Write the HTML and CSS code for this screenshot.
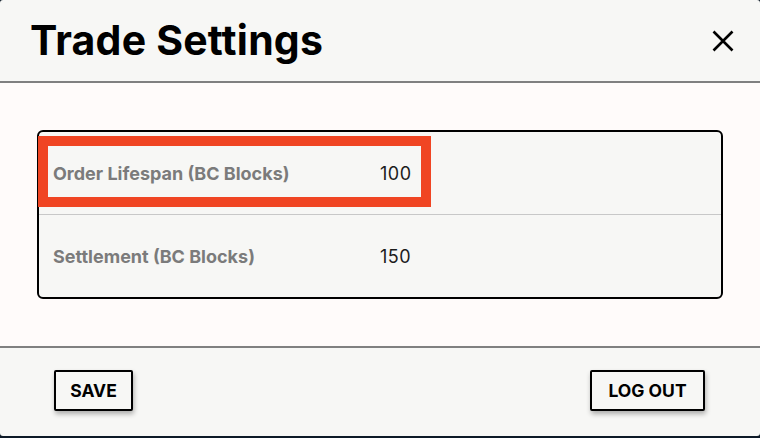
FILE: index.html
```html
<!DOCTYPE html>
<html lang="en">
<head>
<meta charset="utf-8">
<title>Trade Settings</title>
<link rel="stylesheet" href="styles.css">
</head>
<body>
<div class="modal">
  <header class="modal-header">
    <h1 class="modal-title">Trade Settings</h1>
    <button class="close-btn" aria-label="Close">
      <svg viewBox="0 0 22 22" width="22" height="22"><path d="M1.5 1.5 L20.5 20.5 M20.5 1.5 L1.5 20.5" stroke="#000" stroke-width="2.6" fill="none"/></svg>
    </button>
  </header>
  <main class="modal-body">
    <div class="settings-table">
      <div class="settings-row">
        <span class="row-label">Order Lifespan (BC Blocks)</span>
        <span class="row-value">100</span>
      </div>
      <div class="settings-row">
        <span class="row-label">Settlement (BC Blocks)</span>
        <span class="row-value">150</span>
      </div>
      <div class="highlight"></div>
    </div>
  </main>
  <footer class="modal-footer">
    <button class="btn btn-save">SAVE</button>
    <button class="btn btn-logout">LOG OUT</button>
  </footer>
</div>
</body>
</html>
```

FILE: styles.css
```css
html, body {
  margin: 0;
  padding: 0;
  background: #0d1a27;
  height: 100%;
}
body {
  font-family: "Inter", "Lato", sans-serif;
  width: 760px;
  height: 438px;
  overflow: hidden;
}
.modal {
  width: 760px;
  height: 436px;
  background: #f7f7f5;
  border-radius: 3px;
  display: flex;
  flex-direction: column;
  overflow: hidden;
}
.modal-header {
  box-sizing: border-box;
  border-bottom: 2px solid #808080;
  height: 83px;
  display: flex;
  align-items: center;
  justify-content: space-between;
  padding: 0 26px 0 30px;
}
.modal-title {
  margin: 0;
  font-size: 41px;
  font-weight: 700;
  color: #000;
  letter-spacing: 0.2px;
  line-height: 1;
  padding-bottom: 1px;
}
.close-btn {
  background: none;
  border: 0;
  padding: 0;
  width: 22px;
  height: 22px;
  display: flex;
  margin-top: 1px;
}
.modal-body {
  background: #fffbfa;
  height: 265px;
  box-sizing: border-box;
  border-bottom: 2px solid #808080;
  padding: 47px 37px 0 37px;
}
.settings-table {
  position: relative;
  border: 2px solid #000;
  border-radius: 6px;
  background: #f7f7f5;
  display: flex;
  flex-direction: column;
}
.settings-row {
  display: grid;
  grid-template-columns: 327px 1fr;
  align-items: center;
  height: 82px;
  padding: 0 14px;
}
.settings-row + .settings-row {
  border-top: 1px solid #c8c8c8;
}
.row-label {
  font-size: 18px;
  font-weight: 700;
  color: #7b7b7b;
}
.row-value {
  font-size: 18px;
  font-weight: 400;
  color: #1c1c1c;
  letter-spacing: 0.5px;
}
.highlight {
  position: absolute;
  left: -1px;
  top: 4px;
  width: 393px;
  height: 71px;
  box-sizing: border-box;
  border: 10px solid #f04523;
  pointer-events: none;
}
.modal-footer {
  flex: 1;
  display: flex;
  justify-content: space-between;
  align-items: flex-start;
  padding: 22px 55px 0 54px;
}
.btn {
  font-family: inherit;
  font-size: 17.5px;
  font-weight: 700;
  color: #000;
  background: #f7f7f5;
  border: 2px solid #000;
  border-radius: 2px;
  height: 41px;
  padding: 0;
  box-shadow: 1px 3px 5px rgba(0,0,0,0.3);
}
.btn-save { width: 79px; }
.btn-logout { width: 115px; }
```
